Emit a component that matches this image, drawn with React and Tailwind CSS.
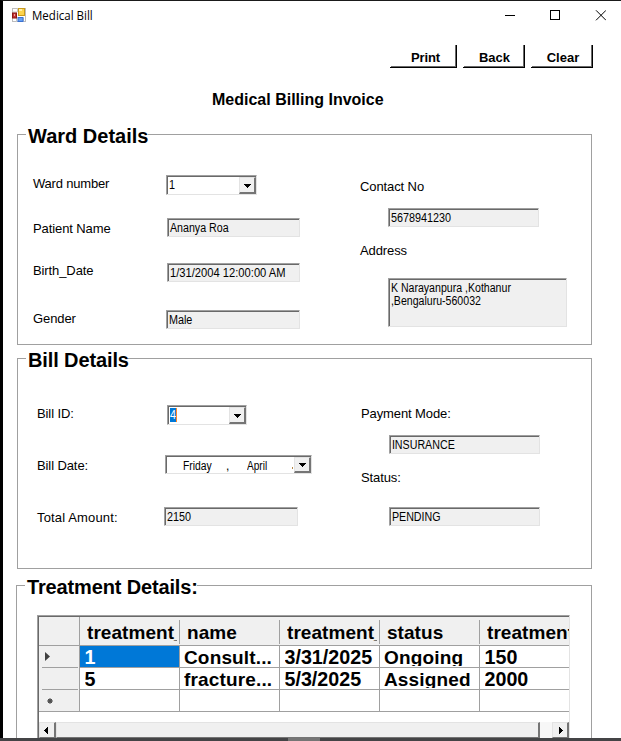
import React from "react";

function Label({ children, className = "", tracking = "tracking-[-0.1px]" }) {
  return <div className={`h-4 text-[13px] leading-4 whitespace-nowrap ${tracking} ${className}`}>{children}</div>;
}

function Frame({ className, children }) {
  return (
    <div className={`border-t border-l border-t-[#a0a0a0] border-l-[#a0a0a0] border-r border-b border-r-[#e3e3e3] border-b-[#e3e3e3] ${className}`}>
      <div className="flex h-full w-full overflow-hidden border-t border-l border-[#696969]">{children}</div>
    </div>
  );
}

function TextBox({ value, className, scale = "scale-x-90" }) {
  return (
    <Frame className={`bg-[#f0f0f0] ${className}`}>
      <span className={`origin-left pt-[2px] pl-[1px] text-[12px] leading-[13px] whitespace-pre ${scale}`}>{value}</span>
    </Frame>
  );
}

function Arrow() {
  return (
    <div className="flex w-[17px] shrink-0 items-center justify-center border-r-2 border-b-2 border-t border-l border-t-[#e3e3e3] border-l-[#e3e3e3] border-r-[#757575] border-b-[#757575] bg-[#f0f0f0]">
      <svg className="mt-px" width="7" height="4" viewBox="0 0 7 4" shapeRendering="crispEdges">
        <path d="M0 0h7v1H6v1H5v1H4v1H3V3H2V2H1V1H0z" />
      </svg>
    </div>
  );
}

function Group({ title, legendClass = "", className, children }) {
  return (
    <section className={`border border-[#a0a0a0] ${className}`}>
      <div className="-mt-[11px] flex pl-2">
        <h2 className={`h-6 bg-white text-[20px] leading-6 font-bold whitespace-nowrap ${legendClass}`}>{title}</h2>
      </div>
      {children}
    </section>
  );
}

function FormButton({ children, className, pad }) {
  return (
    <button className={`h-[23px] border-r border-b border-black pl-px ${className}`}>
      <span className={`flex h-full w-full items-center justify-center border-r border-b border-[#696969] pt-[5px] text-[13px] leading-4 font-bold ${pad}`}>
        {children}
      </span>
    </button>
  );
}

const rows = [
  ["1", "Consult...", "3/31/2025", "Ongoing", "150"],
  ["5", "fracture...", "5/3/2025", "Assigned", "2000"],
  ["", "", "", "", ""],
];
const heads = ["treatment_", "name", "treatment_", "status", "treatment_"];

function RowMarker({ index }) {
  return (
    <div className="flex h-[22px] w-[41px] shrink-0 border-r border-[#a0a0a0] bg-[#f0f0f0] pl-[3px]">
      <div className={`flex-1 border-b border-[#a0a0a0] ${index === 2 ? "-ml-[3px] pl-[3px]" : "mr-px"}`}>
        {index === 0 && (
          <svg className="mt-[6px] ml-[3px]" width="5" height="9" viewBox="0 0 5 9">
            <path d="M0 0L5 4.5L0 9z" fill="#404040" />
          </svg>
        )}
        {index === 2 && (
          <svg className="mt-[8px] ml-[5px]" width="6" height="6" viewBox="0 0 6 6">
            <circle cx="3" cy="3" r="2" fill="#505050" />
            <path d="M3 0v6M0 3h6M1 1l4 4M5 1l-4 4" stroke="#505050" strokeWidth="1" />
          </svg>
        )}
      </div>
    </div>
  );
}

function TreatmentGrid() {
  return (
    <div className="mt-4 ml-5 h-[130px] w-[533px] border-t border-l border-r border-t-[#a0a0a0] border-l-[#a0a0a0] border-r-[#e3e3e3]">
      <div className="h-full overflow-hidden border-t border-l border-[#696969] font-bold">
        <div className="flex h-[29px] w-[560px] border-b border-[#a0a0a0] bg-[#f0f0f0]">
          <div className="w-[41px] shrink-0 border-r border-[#a0a0a0]" />
          {heads.map((h, i) => (
            <div key={i} className="flex w-[100px] shrink-0 pt-[3px] pb-px">
              <div className="h-full w-full overflow-hidden border-r border-[#a0a0a0] pt-px pr-[2px] pl-[7px]">
                <div className="overflow-x-clip text-[19px] leading-[23px] tracking-[0.05px] whitespace-nowrap">{h}</div>
              </div>
            </div>
          ))}
        </div>
        {rows.map((r, i) => (
          <div key={i} className="flex h-[22px] w-[560px]">
            <RowMarker index={i} />
            {r.map((c, j) => (
              <div
                key={j}
                className={`h-[22px] w-[100px] shrink-0 overflow-hidden border-r border-b border-[#a0a0a0] leading-[23px] whitespace-nowrap ${
                  j === 1 || j === 3 ? "pl-1 text-[19px] tracking-[0.15px]" : "pl-[4.5px] text-[19.7px]"
                } ${i === 0 && j === 0 ? "bg-[#0078d7] text-white" : ""}`}
              >
                <div className="h-[20px] overflow-hidden">{c}</div>
              </div>
            ))}
          </div>
        ))}
        <div className="mt-[10px] flex h-4">
          <div className="flex w-[17px] items-center justify-center border-t border-r-2 border-b border-l border-t-[#e3e3e3] border-r-[#757575] border-b-[#757575] border-l-[#e3e3e3] bg-[#f0f0f0]">
            <svg className="mr-[2px]" width="4" height="7" viewBox="0 0 4 7" shapeRendering="crispEdges">
              <path d="M4 0v7H3V6H2V5H1V4H0V3h1V2h1V1h1V0z" />
            </svg>
          </div>
          <div className="w-[484px] border-t border-r-2 border-b border-l border-t-[#e3e3e3] border-r-[#757575] border-b-[#757575] border-l-[#e3e3e3] bg-[#f0f0f0]" />
          <div className="flex-1 bg-[#f7f7f7]" />
          <div className="flex w-[17px] items-center justify-center border-t border-r-2 border-b border-l border-t-[#e3e3e3] border-r-[#757575] border-b-[#757575] border-l-[#e3e3e3] bg-[#f0f0f0]">
            <svg className="ml-px" width="4" height="7" viewBox="0 0 4 7" shapeRendering="crispEdges">
              <path d="M0 0v7h1V6h1V5h1V4h1V3H3V2H2V1H1V0z" />
            </svg>
          </div>
        </div>
      </div>
    </div>
  );
}

function TitleBar() {
  return (
    <header className="flex h-[30px] shrink-0 items-start">
      <svg className="mt-[7px] ml-[9px]" width="14" height="14" viewBox="0 0 14 14">
        <rect x="0.5" y="0.5" width="13" height="13" fill="#fff" stroke="#bdbdbd" />
        <path d="M5.5 0v4M0 4h5M4.5 10v4M11.5 10v4" stroke="#c8c8c8" />
        <rect x="6.5" y="0.5" width="6" height="7" fill="#fcd34d" stroke="#c99a1c" />
        <rect x="7" y="1" width="3" height="2" fill="#fff0a8" />
        <rect x="0.5" y="5" width="4" height="5" fill="#c03434" stroke="#8c1616" />
        <rect x="2" y="6" width="1" height="2" fill="#f2a0a0" />
        <rect x="6" y="9.5" width="5" height="4" fill="#64a0f4" stroke="#3a70d0" />
      </svg>
      <span className="mt-[6px] ml-[6px] origin-left scale-x-[0.96] font-['Open_Sans',sans-serif] text-[12px] leading-[17px] whitespace-nowrap">
        Medical Bill
      </span>
      <svg className="mt-[9px] mr-[15px] ml-auto" width="101" height="11" viewBox="0 0 101 11" fill="none" stroke="#000">
        <path d="M0 5.5h10" />
        <rect x="45.5" y="0.5" width="9" height="9" />
        <path d="M91 0.3l10 10M101 0.3l-10 10" />
      </svg>
    </header>
  );
}

export default function App() {
  return (
    <div className="flex h-[741px] w-[621px] flex-col overflow-hidden bg-white font-['Liberation_Sans',Arial,sans-serif] text-black">
      <main className="flex h-[738px] shrink-0 flex-col overflow-hidden border-t border-l-[3px] border-t-[#1a1a1a] border-l-black">
        <TitleBar />
        <div className="mt-[14px] mr-7 flex shrink-0 justify-end gap-[6px]">
          <FormButton className="w-[67px]" pad="pl-[5px] tracking-[-0.1px]">Print</FormButton>
          <FormButton className="w-[62px]" pad="pl-[2px]">Back</FormButton>
          <FormButton className="w-[62px]" pad="pl-[3px]">Clear</FormButton>
        </div>
        <h1 className="mt-[22px] ml-[209px] h-5 shrink-0 text-[16px] leading-5 font-bold">Medical Billing Invoice</h1>

        <Group title="Ward Details" legendClass="w-[122px] pl-[2px]" className="mt-6 ml-[14px] h-[211px] w-[575px] shrink-0">
          <div className="flex pl-[15px]">
            <div className="flex w-[133px] flex-col">
              <Label className="mt-7" tracking="tracking-[-0.2px]">Ward number</Label>
              <Label className="mt-[29px]">Patient Name</Label>
              <Label className="mt-[26px]">Birth_Date</Label>
              <Label className="mt-8">Gender</Label>
            </div>
            <div className="flex w-[193px] flex-col">
              <Frame className="mt-[27px] h-5 w-[91px]">
                <span className="flex-1 origin-left scale-x-90 pt-[2px] pl-px text-[12px] leading-[13px]">1</span>
                <Arrow />
              </Frame>
              <TextBox value="Ananya Roa" scale="scale-x-[0.89]" className="mt-[23px] ml-px h-[19px] w-[133px]" />
              <TextBox value="1/31/2004 12:00:00 AM" scale="scale-x-[0.932]" className="mt-[26px] ml-px h-[19px] w-[133px]" />
              <TextBox value="Male" className="mt-7 h-[19px] w-[134px]" />
            </div>
            <div className="flex flex-col">
              <Label className="mt-[31px] ml-px">Contact No</Label>
              <TextBox value="5678941230" className="mt-[13px] ml-[29px] h-[19px] w-[151px]" />
              <Label className="mt-4 ml-px">Address</Label>
              <TextBox
                value={"K Narayanpura ,Kothanur\n,Bengaluru-560032"}
                scale="scale-x-[0.882]"
                className="mt-[19px] ml-[29px] h-[49px] w-[179px]"
              />
            </div>
          </div>
        </Group>

        <Group title="Bill Details" legendClass="w-[102px] pl-[2px] tracking-[-0.12px]" className="mt-[13px] ml-[14px] h-[211px] w-[575px] shrink-0">
          <div className="flex pl-[19px]">
            <div className="flex w-[127px] flex-col">
              <Label className="mt-[34px]">Bill ID:</Label>
              <Label className="mt-9">Bill Date:</Label>
              <Label className="mt-9" tracking="tracking-[0.15px]">Total Amount:</Label>
            </div>
            <div className="flex w-[197px] flex-col">
              <Frame className="mt-[33px] ml-[3px] h-5 w-[80px]">
                <span className="flex flex-1 pt-px pl-px text-[12px] leading-[14px]">
                  <span className="h-[14px] w-[7px] border-r border-[#ff8728] bg-[#0078d7] text-white">
                    <span className="inline-block origin-left scale-x-90">4</span>
                  </span>
                </span>
                <Arrow />
              </Frame>
              <Frame className="mt-[30px] ml-px h-[19px] w-[147px]">
                <div className="flex flex-1 overflow-hidden pt-[3px] pl-[16px] text-[12px] leading-[13px]">
                  <span className="w-[43px] origin-left scale-x-[0.86]">Friday</span>
                  <span className="w-[21px]">,</span>
                  <span className="w-[45px] origin-left scale-x-[0.84]">April</span>
                  <span className="mt-[7px] h-[2px] w-px bg-[#b58a4a]" />
                </div>
                <Arrow />
              </Frame>
              <TextBox value="2150" className="mt-[33px] h-[19px] w-[134px]" />
            </div>
            <div className="flex flex-col">
              <Label className="mt-[34px]">Payment Mode:</Label>
              <TextBox value="INSURANCE" scale="scale-x-[0.89]" className="mt-[13px] ml-[28px] h-[19px] w-[151px]" />
              <Label className="mt-4">Status:</Label>
              <TextBox value="PENDING" scale="scale-x-[0.89]" className="mt-[21px] ml-[28px] h-[19px] w-[151px]" />
            </div>
          </div>
        </Group>

        <Group
          title="Treatment Details:"
          legendClass="w-[172px] pl-[2px] tracking-[-0.15px]"
          className="mt-4 ml-[13px] h-[170px] w-[576px] shrink-0"
        >
          <TreatmentGrid />
        </Group>
      </main>
      <footer className="flex h-[3px] shrink-0 bg-[#444446]">
        <div className="ml-[288px] w-[32px] bg-[#757575]" />
      </footer>
    </div>
  );
}
